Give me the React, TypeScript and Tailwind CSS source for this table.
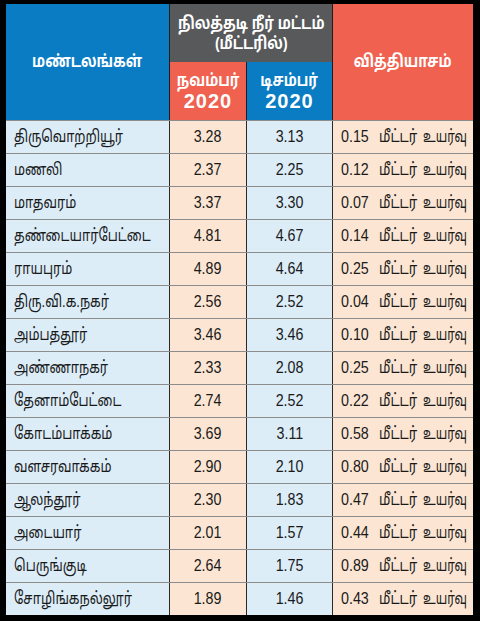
const rows: [string, string, string, string][] = [
  ["திருவொற்றியூர்", "3.28", "3.13", "0.15"],
  ["மணலி", "2.37", "2.25", "0.12"],
  ["மாதவரம்", "3.37", "3.30", "0.07"],
  ["தண்டையார்பேட்டை", "4.81", "4.67", "0.14"],
  ["ராயபுரம்", "4.89", "4.64", "0.25"],
  ["திரு.வி.க.நகர்", "2.56", "2.52", "0.04"],
  ["அம்பத்தூர்", "3.46", "3.46", "0.10"],
  ["அண்ணாநகர்", "2.33", "2.08", "0.25"],
  ["தேனாம்பேட்டை", "2.74", "2.52", "0.22"],
  ["கோடம்பாக்கம்", "3.69", "3.11", "0.58"],
  ["வளசரவாக்கம்", "2.90", "2.10", "0.80"],
  ["ஆலந்தூர்", "2.30", "1.83", "0.47"],
  ["அடையார்", "2.01", "1.57", "0.44"],
  ["பெருங்குடி", "2.64", "1.75", "0.89"],
  ["சோழிங்கநல்லூர்", "1.89", "1.46", "0.43"],
];

const font = { fontFamily: '"Liberation Sans", "Noto Sans Tamil", "Noto Sans", sans-serif' };

export default function App() {
  return (
    <div className="w-[480px] h-[621px] bg-black pt-[4px] pl-[6px] pr-[7px] pb-[6px]" style={font}>
      {/* header */}
      <div className="grid grid-cols-[163px_76px_85px_140px] grid-rows-[58px_58px] gap-x-px bg-[#1e1e1e] text-white font-bold">
        <div className="row-span-2 bg-[#0a7cc4] flex items-center justify-center">
          <span className="inline-block text-[17px] scale-x-[0.82]">மண்டலங்கள்</span>
        </div>
        <div className="col-span-2 bg-[#58595b] flex flex-col items-center justify-center leading-[20px] pt-[2px]">
          <span className="inline-block text-[17px] scale-x-[0.82] whitespace-nowrap">நிலத்தடி நீர் மட்டம்</span>
          <span className="inline-block text-[17px] scale-x-[0.82]">(மீட்டரில்)</span>
        </div>
        <div className="row-span-2 bg-[#f0614f] flex items-center justify-center">
          <span className="inline-block text-[17px] scale-x-[0.82]">வித்தியாசம்</span>
        </div>
        <div className="bg-[#f0614f] flex flex-col items-center justify-center leading-[21px]">
          <span className="inline-block text-[17px] scale-x-[0.82]">நவம்பர்</span>
          <span className="text-[20px] tracking-[1px]">2020</span>
        </div>
        <div className="bg-[#0a7cc4] flex flex-col items-center justify-center leading-[21px]">
          <span className="inline-block text-[17px] scale-x-[0.82]">டிசம்பர்</span>
          <span className="text-[20px] tracking-[1px]">2020</span>
        </div>
      </div>
      {/* body */}
      {rows.map(([name, nov, dec, diff]) => (
        <div key={name} className="grid grid-cols-[163px_76px_85px_140px] h-[33px] gap-x-px bg-[#2a2a2a] border-t border-[#8c8c8c] text-[#1a1a1a] text-[17px]">
          <div className="bg-[#dcedf8] flex items-center pl-[8px] overflow-hidden">
            <span className="inline-block origin-left scale-x-[0.76] whitespace-nowrap">{name}</span>
          </div>
          <div className="bg-[#fce6d3] flex items-center justify-center">
            <span className="inline-block scale-x-[0.84]">{nov}</span>
          </div>
          <div className="bg-[#dcedf8] flex items-center justify-center">
            <span className="inline-block scale-x-[0.84]">{dec}</span>
          </div>
          <div className="bg-[#fce6d3] flex items-center pl-[8px] whitespace-nowrap overflow-hidden">
            <span className="w-[38px] shrink-0 inline-block origin-left scale-x-[0.84]">{diff}</span>
            <span className="w-[44px] shrink-0 inline-block origin-left scale-x-[0.78]">மீட்டர்</span>
            <span className="shrink-0 inline-block origin-left scale-x-[0.7]">உயர்வு</span>
          </div>
        </div>
      ))}
    </div>
  );
}
